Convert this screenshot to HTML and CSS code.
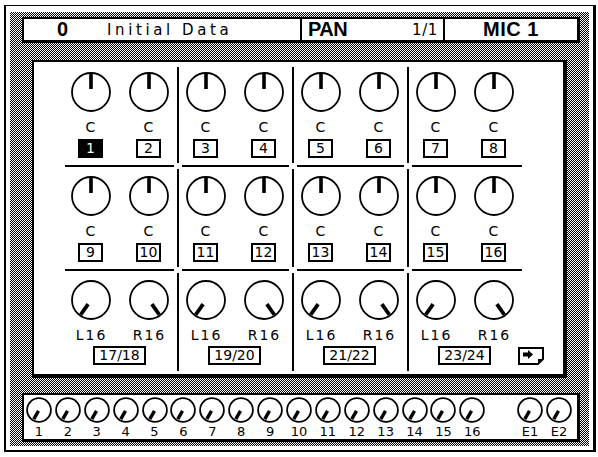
FILE: index.html
```html
<!DOCTYPE html>
<html>
<head>
<meta charset="utf-8">
<link rel="stylesheet" href="styles.css">
</head>
<body>
<svg class="defs" width="0" height="0" aria-hidden="true">
  <defs>
    <symbol id="kc" viewBox="0 0 40 40">
      <circle cx="20" cy="20" r="19" fill="#fff" stroke="#000" stroke-width="1.8"/>
      <line x1="20" y1="1.5" x2="20" y2="17" stroke="#000" stroke-width="3.6"/>
    </symbol>
    <symbol id="kl" viewBox="0 0 40 40">
      <circle cx="20" cy="20" r="19" fill="#fff" stroke="#000" stroke-width="1.8"/>
      <line x1="20" y1="2" x2="20" y2="15" stroke="#000" stroke-width="3.8" transform="rotate(-145 20 20)"/>
    </symbol>
    <symbol id="kr" viewBox="0 0 40 40">
      <circle cx="20" cy="20" r="19" fill="#fff" stroke="#000" stroke-width="1.8"/>
      <line x1="20" y1="2" x2="20" y2="15" stroke="#000" stroke-width="3.8" transform="rotate(145 20 20)"/>
    </symbol>
    <symbol id="ks" viewBox="0 0 26 26">
      <circle cx="13" cy="13" r="11.9" fill="#fff" stroke="#000" stroke-width="1.8"/>
      <line x1="13" y1="2.5" x2="13" y2="12" stroke="#000" stroke-width="3.4" transform="rotate(-150 13 13)"/>
    </symbol>
  </defs>
</svg>
<div class="frame">
  <div class="dither">
    <div class="header">
      <div class="hsec hsec-scene"><span class="scene-no">0</span><span class="scene-name">Initial Data</span></div>
      <div class="hsec hsec-page"><span class="page-title">PAN</span><span class="page-num">1/1</span></div>
      <div class="hsec hsec-chan"><span class="chan-name">MIC 1</span></div>
    </div>
    <div class="panel">
      <div class="grid">
        <!-- row 1 -->
        <div class="grp">
          <div class="ch"><svg class="knob" width="40" height="40"><use href="#kc"/></svg><div class="lbl">C</div><div class="num sel">1</div></div>
          <div class="ch"><svg class="knob" width="40" height="40"><use href="#kc"/></svg><div class="lbl">C</div><div class="num">2</div></div>
        </div>
        <div class="v top"></div>
        <div class="grp">
          <div class="ch"><svg class="knob" width="40" height="40"><use href="#kc"/></svg><div class="lbl">C</div><div class="num">3</div></div>
          <div class="ch"><svg class="knob" width="40" height="40"><use href="#kc"/></svg><div class="lbl">C</div><div class="num">4</div></div>
        </div>
        <div class="v top"></div>
        <div class="grp">
          <div class="ch"><svg class="knob" width="40" height="40"><use href="#kc"/></svg><div class="lbl">C</div><div class="num">5</div></div>
          <div class="ch"><svg class="knob" width="40" height="40"><use href="#kc"/></svg><div class="lbl">C</div><div class="num">6</div></div>
        </div>
        <div class="v top"></div>
        <div class="grp">
          <div class="ch"><svg class="knob" width="40" height="40"><use href="#kc"/></svg><div class="lbl">C</div><div class="num">7</div></div>
          <div class="ch"><svg class="knob" width="40" height="40"><use href="#kc"/></svg><div class="lbl">C</div><div class="num">8</div></div>
        </div>
        <!-- line row -->
        <div class="h first"></div><div class="x"></div><div class="h"></div><div class="x"></div><div class="h"></div><div class="x"></div><div class="h last"></div>
        <!-- row 2 -->
        <div class="grp">
          <div class="ch"><svg class="knob" width="40" height="40"><use href="#kc"/></svg><div class="lbl">C</div><div class="num">9</div></div>
          <div class="ch"><svg class="knob" width="40" height="40"><use href="#kc"/></svg><div class="lbl">C</div><div class="num">10</div></div>
        </div>
        <div class="v"></div>
        <div class="grp">
          <div class="ch"><svg class="knob" width="40" height="40"><use href="#kc"/></svg><div class="lbl">C</div><div class="num">11</div></div>
          <div class="ch"><svg class="knob" width="40" height="40"><use href="#kc"/></svg><div class="lbl">C</div><div class="num">12</div></div>
        </div>
        <div class="v"></div>
        <div class="grp">
          <div class="ch"><svg class="knob" width="40" height="40"><use href="#kc"/></svg><div class="lbl">C</div><div class="num">13</div></div>
          <div class="ch"><svg class="knob" width="40" height="40"><use href="#kc"/></svg><div class="lbl">C</div><div class="num">14</div></div>
        </div>
        <div class="v"></div>
        <div class="grp">
          <div class="ch"><svg class="knob" width="40" height="40"><use href="#kc"/></svg><div class="lbl">C</div><div class="num">15</div></div>
          <div class="ch"><svg class="knob" width="40" height="40"><use href="#kc"/></svg><div class="lbl">C</div><div class="num">16</div></div>
        </div>
        <!-- line row -->
        <div class="h first"></div><div class="x"></div><div class="h"></div><div class="x"></div><div class="h"></div><div class="x"></div><div class="h last"></div>
        <!-- row 3 -->
        <div class="grp">
          <div class="ch"><svg class="knob" width="40" height="40"><use href="#kl"/></svg><div class="lbl">L16</div></div>
          <div class="ch"><svg class="knob" width="40" height="40"><use href="#kr"/></svg><div class="lbl">R16</div></div>
          <div class="pairrow"><div class="pair">17/18</div></div>
        </div>
        <div class="v"></div>
        <div class="grp">
          <div class="ch"><svg class="knob" width="40" height="40"><use href="#kl"/></svg><div class="lbl">L16</div></div>
          <div class="ch"><svg class="knob" width="40" height="40"><use href="#kr"/></svg><div class="lbl">R16</div></div>
          <div class="pairrow"><div class="pair">19/20</div></div>
        </div>
        <div class="v"></div>
        <div class="grp">
          <div class="ch"><svg class="knob" width="40" height="40"><use href="#kl"/></svg><div class="lbl">L16</div></div>
          <div class="ch"><svg class="knob" width="40" height="40"><use href="#kr"/></svg><div class="lbl">R16</div></div>
          <div class="pairrow"><div class="pair">21/22</div></div>
        </div>
        <div class="v"></div>
        <div class="grp">
          <div class="ch"><svg class="knob" width="40" height="40"><use href="#kl"/></svg><div class="lbl">L16</div></div>
          <div class="ch"><svg class="knob" width="40" height="40"><use href="#kr"/></svg><div class="lbl">R16</div></div>
          <div class="pairrow">
            <div class="pair">23/24</div>
            <svg class="next" width="26" height="18" viewBox="0 0 26 18">
              <path d="M1 1H25V12L20 17H1Z" fill="#fff" stroke="#000" stroke-width="2"/>
              <path d="M25 12L20 17V12Z" fill="#000"/>
              <path d="M5 5.5H10V3L15 7.5L10 12V9.5H5Z" fill="#000"/>
            </svg>
          </div>
        </div>
      </div>
    </div>
    <div class="strip">
      <div class="sk"><svg class="sknob" width="26" height="26"><use href="#ks"/></svg><span class="slbl">1</span></div>
      <div class="sk"><svg class="sknob" width="26" height="26"><use href="#ks"/></svg><span class="slbl">2</span></div>
      <div class="sk"><svg class="sknob" width="26" height="26"><use href="#ks"/></svg><span class="slbl">3</span></div>
      <div class="sk"><svg class="sknob" width="26" height="26"><use href="#ks"/></svg><span class="slbl">4</span></div>
      <div class="sk"><svg class="sknob" width="26" height="26"><use href="#ks"/></svg><span class="slbl">5</span></div>
      <div class="sk"><svg class="sknob" width="26" height="26"><use href="#ks"/></svg><span class="slbl">6</span></div>
      <div class="sk"><svg class="sknob" width="26" height="26"><use href="#ks"/></svg><span class="slbl">7</span></div>
      <div class="sk"><svg class="sknob" width="26" height="26"><use href="#ks"/></svg><span class="slbl">8</span></div>
      <div class="sk"><svg class="sknob" width="26" height="26"><use href="#ks"/></svg><span class="slbl">9</span></div>
      <div class="sk"><svg class="sknob" width="26" height="26"><use href="#ks"/></svg><span class="slbl">10</span></div>
      <div class="sk"><svg class="sknob" width="26" height="26"><use href="#ks"/></svg><span class="slbl">11</span></div>
      <div class="sk"><svg class="sknob" width="26" height="26"><use href="#ks"/></svg><span class="slbl">12</span></div>
      <div class="sk"><svg class="sknob" width="26" height="26"><use href="#ks"/></svg><span class="slbl">13</span></div>
      <div class="sk"><svg class="sknob" width="26" height="26"><use href="#ks"/></svg><span class="slbl">14</span></div>
      <div class="sk"><svg class="sknob" width="26" height="26"><use href="#ks"/></svg><span class="slbl">15</span></div>
      <div class="sk"><svg class="sknob" width="26" height="26"><use href="#ks"/></svg><span class="slbl">16</span></div>
      <div class="sk"></div>
      <div class="sk"><svg class="sknob" width="26" height="26"><use href="#ks"/></svg><span class="slbl">E1</span></div>
      <div class="sk"><svg class="sknob" width="26" height="26"><use href="#ks"/></svg><span class="slbl">E2</span></div>
    </div>
  </div>
</div>
</body>
</html>
```
FILE: styles.css
```css
* {
  box-sizing: border-box;
  margin: 0;
  padding: 0;
}

html, body {
  background: #fff;
}

body {
  width: 598px;
  height: 457px;
  overflow: hidden;
  font-family: "DejaVu Sans", sans-serif;
  color: #000;
}

.defs {
  display: block;
  width: 0;
  height: 0;
  overflow: hidden;
}

.frame {
  margin: 5px 2px 0 4px;
  width: 592px;
  height: 447px;
  border-style: solid;
  border-color: #000;
  border-width: 1px 3px 2px 2px;
  padding: 6px 4px 4px 4px;
}

.dither {
  height: 434px;
  display: flex;
  flex-direction: column;
  background: repeating-conic-gradient(#000 0 25%, #fff 0 50%) 0 0 / 2px 2px;
}

/* ---------- header ---------- */
.header {
  margin: 5px 9px 0 12px;
  height: 26px;
  flex: none;
  border-style: solid;
  border-color: #000;
  border-width: 2px 3px 3px 2px;
  background: #fff;
  display: flex;
}

.hsec {
  display: flex;
  align-items: center;
  height: 100%;
}

.hsec-scene {
  width: 278px;
  border-right: 2px solid #000;
  padding-left: 33px;
}

.scene-no {
  font: bold 20px "Liberation Sans", sans-serif;
  width: 11px;
}

.scene-name {
  margin-left: 39px;
  font-size: 15px;
  letter-spacing: 3.6px;
}

.hsec-page {
  width: 143px;
  border-right: 2px solid #000;
  padding: 0 5px 0 6px;
  justify-content: space-between;
}

.page-title {
  font: bold 20px "Liberation Sans", sans-serif;
  letter-spacing: -0.5px;
}

.page-num {
  font-size: 15px;
  letter-spacing: 0.6px;
}

.hsec-chan {
  flex: 1;
  justify-content: center;
}

.chan-name {
  font: bold 20px "Liberation Sans", sans-serif;
  letter-spacing: 0.5px;
}

/* ---------- main panel ---------- */
.panel {
  margin: 17px 22px 0;
  height: 318px;
  flex: none;
  border-style: solid;
  border-color: #000;
  border-width: 2px 4px 4px 2px;
  background: #fff;
  padding: 1px 0 0 30px;
}

.grid {
  display: grid;
  grid-template-columns: 113px 2px 113px 2px 113px 2px 113px;
  grid-template-rows: 102px 2px 102px 2px 102px;
}

.v {
  background: #000;
  margin: 2px 0;
}

.v.top {
  margin-top: 4px;
}

.h {
  background: #000;
  margin: 0 3px;
}

.h.first {
  margin-left: 1px;
}

.h.last {
  margin-right: 0;
}

.grp {
  display: grid;
  grid-template-columns: 53px 53px;
  column-gap: 5px;
  align-content: start;
  padding-top: 9px;
}

.ch {
  display: flex;
  flex-direction: column;
  align-items: center;
}

.knob {
  display: block;
  width: 40px;
  height: 40px;
}

.lbl {
  margin-top: 8px;
  height: 14px;
  font-size: 14px;
  line-height: 14px;
  letter-spacing: 2px;
  padding-left: 2px;
}

.num {
  margin-top: 5px;
  width: 25px;
  height: 19px;
  border: 2px solid #000;
  font-size: 14px;
  line-height: 15px;
  text-align: center;
}

.num.sel {
  background: #000;
  color: #fff;
}

.pairrow {
  grid-column: 1 / -1;
  display: grid;
  grid-template-columns: minmax(0, 1fr) auto minmax(0, 1fr);
  align-items: center;
  margin-top: 4px;
}

.pair {
  grid-column: 2;
  height: 19px;
  border: 2px solid #000;
  padding: 0 4px;
  font-size: 14px;
  line-height: 15px;
}

.next {
  grid-column: 3;
  display: block;
  margin-left: 27px;
}

/* ---------- bottom strip ---------- */
.strip {
  margin: 15px 9px 0 12px;
  height: 49px;
  flex: none;
  border-style: solid;
  border-color: #000;
  border-width: 2px 3px 3px 2px;
  background: #fff;
  display: grid;
  grid-template-columns: repeat(19, 28.9px);
  padding: 2px 0 0 0.5px;
}

.sk {
  display: flex;
  flex-direction: column;
  align-items: center;
}

.sknob {
  display: block;
  width: 26px;
  height: 26px;
}

.slbl {
  margin-top: 3px;
  font-size: 13px;
  line-height: 12px;
}
```
